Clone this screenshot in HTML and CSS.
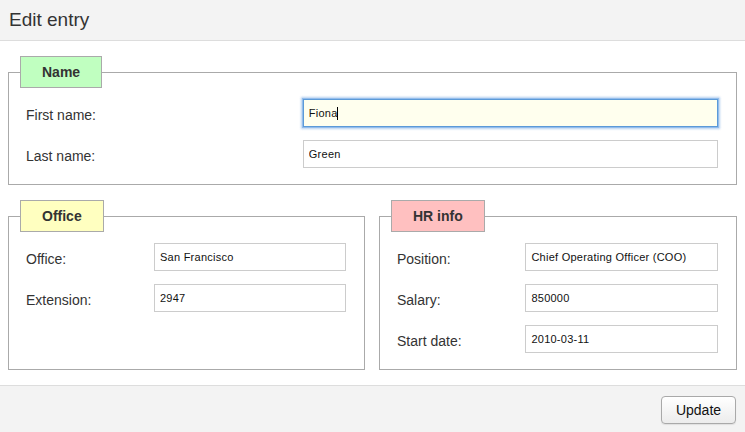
FILE: index.html
```html
<!DOCTYPE html>
<html>
<head>
<meta charset="utf-8">
<title>Edit entry</title>
<link rel="stylesheet" href="styles.css">
</head>
<body>
<div class="modal">
  <div class="header">Edit entry</div>
  <div class="content">
    <fieldset class="group">
      <legend class="legend green">Name</legend>
      <div class="fields">
        <div class="field">
          <label class="label">First name:</label>
          <span class="control focus-wrap">
            <input class="input focused" type="text" value="Fiona">
            <span class="caret"></span>
          </span>
        </div>
        <div class="field">
          <label class="label">Last name:</label>
          <span class="control"><input class="input" type="text" value="Green"></span>
        </div>
      </div>
    </fieldset>
    <div class="columns">
      <fieldset class="group">
        <legend class="legend yellow">Office</legend>
        <div class="fields">
          <div class="field">
            <label class="label">Office:</label>
            <span class="control"><input class="input" type="text" value="San Francisco"></span>
          </div>
          <div class="field">
            <label class="label">Extension:</label>
            <span class="control"><input class="input" type="text" value="2947"></span>
          </div>
        </div>
      </fieldset>
      <fieldset class="group">
        <legend class="legend red">HR info</legend>
        <div class="fields">
          <div class="field">
            <label class="label">Position:</label>
            <span class="control"><input class="input" type="text" value="Chief Operating Officer (COO)"></span>
          </div>
          <div class="field">
            <label class="label">Salary:</label>
            <span class="control"><input class="input" type="text" value="850000"></span>
          </div>
          <div class="field">
            <label class="label">Start date:</label>
            <span class="control"><input class="input" type="text" value="2010-03-11"></span>
          </div>
        </div>
      </fieldset>
    </div>
  </div>
  <div class="footer">
    <button class="button" type="button">Update</button>
  </div>
</div>
</body>
</html>
```

FILE: styles.css
```css
html, body {
  margin: 0;
  padding: 0;
  height: 100%;
}
body {
  font-family: "Liberation Sans", Arial, Helvetica, sans-serif;
  color: #333;
  background: #fff;
}
.modal {
  display: flex;
  flex-direction: column;
  min-height: 100%;
}
.header {
  height: 40px;
  line-height: 40px;
  padding-left: 9px;
  font-size: 19px;
  color: #333;
  background: #f3f3f3;
  border-bottom: 1px solid #dddddd;
}
.content {
  padding: 15px 8px;
  display: flex;
  flex-direction: column;
  gap: 15px;
}
.columns {
  display: grid;
  grid-template-columns: 357px 1fr;
  gap: 14px;
}
.group {
  margin: 0;
  padding: 0;
  min-width: 0;
  border: 1px solid #aaaaaa;
}
.legend {
  margin-left: 11px;
  padding: 0 21px;
  border: 1px solid #aaaaaa;
  font-weight: bold;
  font-size: 14px;
  line-height: 30px;
  color: #333;
}
.green { background: #c0ffc0; }
.yellow { background: #ffffc0; }
.red { background: #ffc0c0; }
.fields {
  padding: 11px 18px 16px 17px;
  display: flex;
  flex-direction: column;
  gap: 13px;
}
.field {
  display: flex;
  align-items: center;
  height: 28px;
}
.label {
  flex: 0 0 40%;
  padding-top: 4px;
  font-size: 14px;
  color: #333;
}
.control {
  flex: 0 0 60%;
  display: block;
}
.focus-wrap {
  position: relative;
}
.input {
  display: block;
  box-sizing: border-box;
  width: 100%;
  height: 28px;
  margin: 0;
  padding: 0 5px;
  border: 1px solid #cccccc;
  border-radius: 0;
  background: #fff;
  font-family: "Liberation Sans", Arial, sans-serif;
  font-size: 11px;
  letter-spacing: 0.25px;
  color: #111;
  outline: none;
}
.focused {
  background: #ffffee;
  border-color: #5c9ad8;
  box-shadow: 0 0 0 1px #93bdec, 0 0 2px 2px rgba(90, 150, 220, 0.45);
}
.caret {
  position: absolute;
  left: 34px;
  top: 8px;
  width: 1px;
  height: 13px;
  background: #000;
}
.footer {
  flex: 1;
  display: flex;
  justify-content: flex-end;
  align-items: flex-start;
  padding: 10px 9px 8px;
  background: #f3f3f3;
  border-top: 1px solid #dddddd;
}
.button {
  box-sizing: border-box;
  width: 75px;
  height: 28px;
  padding: 0;
  font-family: "Liberation Sans", Arial, sans-serif;
  font-size: 14px;
  color: #111;
  background: linear-gradient(#ffffff, #ececec);
  border: 1px solid #a9a9a9;
  border-radius: 4px;
  box-shadow: 0 1px 1px rgba(0, 0, 0, 0.08);
}
```
